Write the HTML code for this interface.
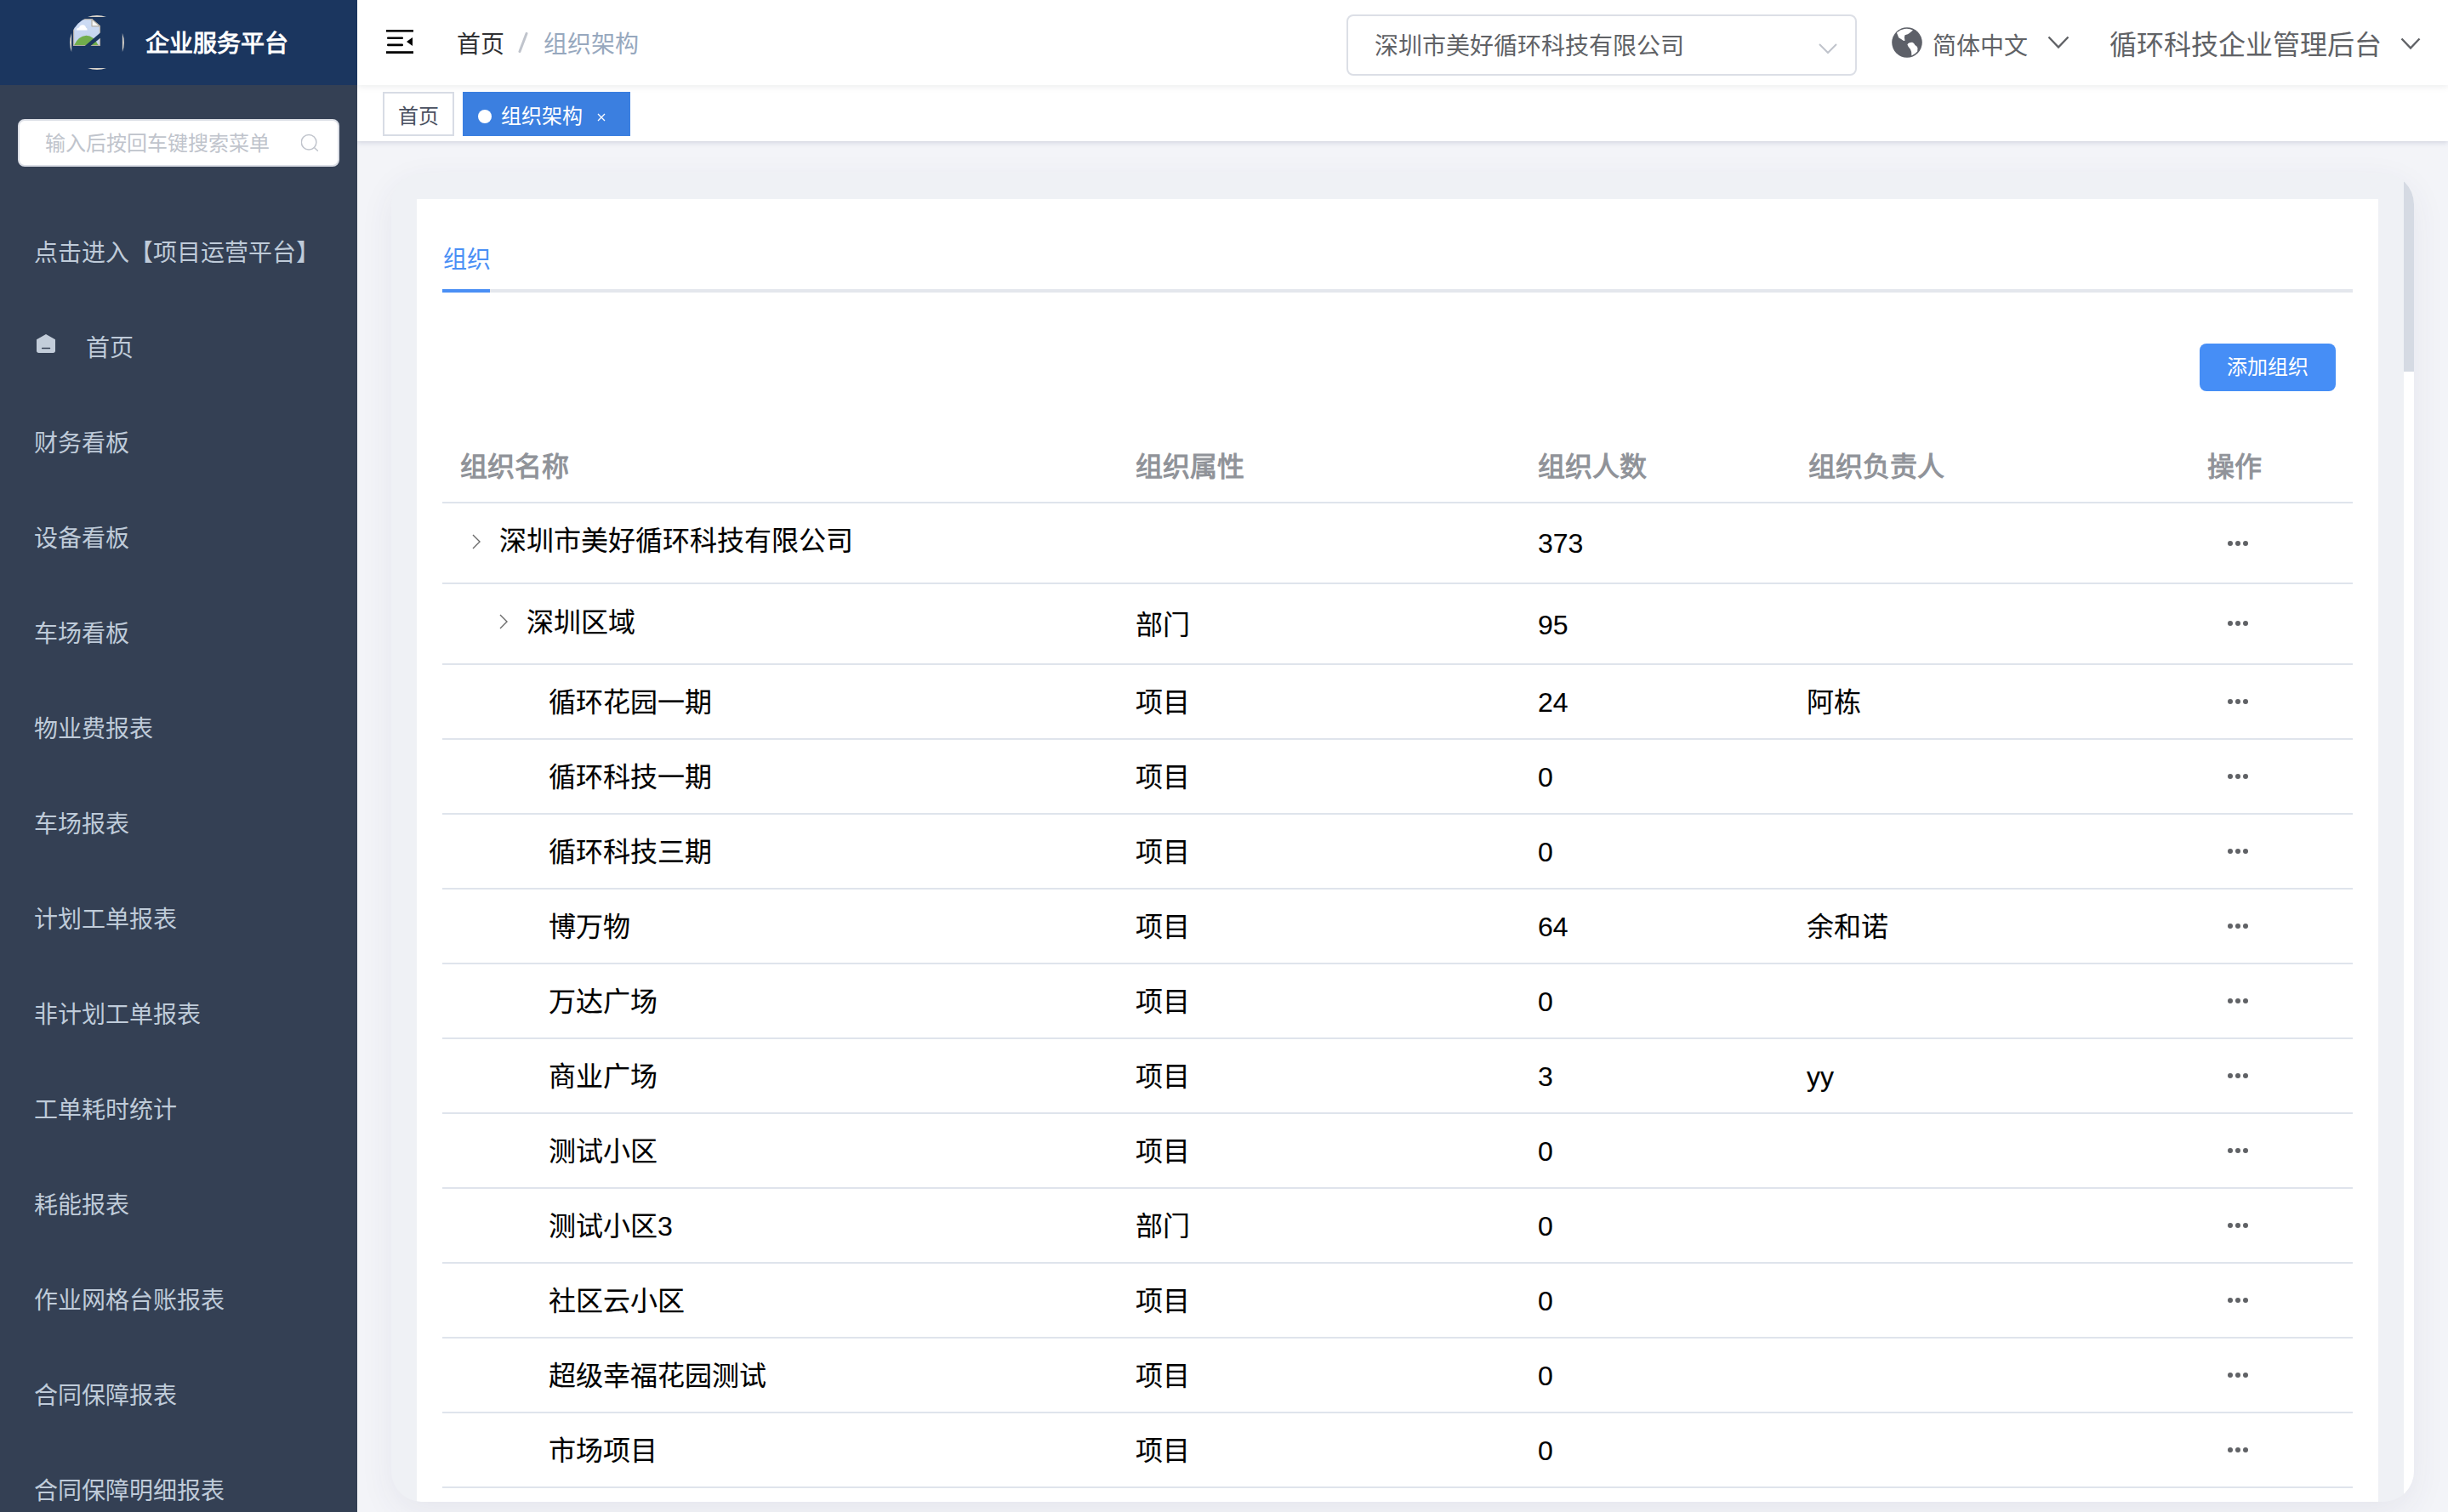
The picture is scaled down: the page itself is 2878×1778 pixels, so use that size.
<!DOCTYPE html>
<html lang="zh-CN">
<head>
<meta charset="utf-8">
<title>组织架构</title>
<style>
*{box-sizing:border-box;margin:0;padding:0}
html,body{width:2878px;height:1778px;overflow:hidden;background:#f3f4f8;font-family:"Liberation Sans",sans-serif;}
.abs{position:absolute}
#side{position:absolute;left:0;top:0;width:420px;height:1778px;background:#344054;z-index:5}
#logo{position:absolute;left:0;top:0;width:420px;height:100px;background:#1b365f}
#logo .title{position:absolute;left:171px;top:32px;font-size:28px;line-height:40px;color:#fff;font-weight:bold;white-space:nowrap}
#search{position:absolute;left:21px;top:140px;width:378px;height:56px;background:#fff;border:2px solid #dcdfe6;border-radius:8px}
#search .ph{position:absolute;left:30px;top:10px;font-size:24px;line-height:34px;color:#c0c4cc;white-space:nowrap}
.mi{position:absolute;left:40px;font-size:28px;line-height:40px;color:#bfcbd9;white-space:nowrap}
#header{position:absolute;left:420px;top:0;width:2458px;height:100px;background:#fff;box-shadow:0 2px 8px rgba(0,21,41,.08);z-index:3}
#tags{position:absolute;left:420px;top:100px;width:2458px;height:66px;background:#fff;box-shadow:0 2px 6px rgba(20,40,100,.13),0 0 6px rgba(0,0,0,.03);z-index:2}
.tag{position:absolute;top:8px;height:52px;font-size:24px;line-height:48px;white-space:nowrap}
#wrap{position:absolute;left:460px;top:204px;width:2378px;height:1562px;background:#eff1f5;border-radius:36px;overflow:hidden;box-shadow:0 12px 40px rgba(50,60,100,.07)}
#card{position:absolute;left:30px;top:30px;width:2306px;height:1600px;background:#fff}
.row{position:absolute;left:30px;width:1910px;border-bottom:2px solid #dfe4ec}
.c{position:absolute;font-size:32px;line-height:44px;color:#000;white-space:nowrap;transform:translateY(1px);-webkit-text-stroke:0.12px #000}
.h{position:absolute;font-size:32px;line-height:44px;color:#909399;font-weight:bold;white-space:nowrap}
.dots{position:absolute;width:24px;height:6px}
.dots i{position:absolute;top:0;width:6px;height:6px;border-radius:50%;background:#606266}
</style>
</head>
<body>
<div id="side">
  <div id="logo">
    <svg class="abs" style="left:82px;top:18px" width="64" height="64" viewBox="0 0 64 64">
      <defs>
        <linearGradient id="sky" x1="0" y1="0" x2="0" y2="1"><stop offset="0" stop-color="#cddcf5"/><stop offset="1" stop-color="#c3d2ec"/></linearGradient>
        <clipPath id="cc"><circle cx="28" cy="28" r="31.5"/></clipPath>
      </defs>
      <g fill="#d8d3cb">
        <path d="M21 2.1 A32 32 0 0 1 43 2.1 Z"/>
        <path d="M43 61.9 A32 32 0 0 1 21 61.9 Z"/>
        <path d="M2.1 43 A32 32 0 0 1 2.1 21 Z"/>
        <path d="M61.9 21 A32 32 0 0 1 61.9 43 Z"/>
      </g>
      <g clip-path="url(#cc)" transform="translate(4,4)">
        <path d="M0.6 31.4 V0.6 H22 L31.4 8.8 V31.4 Z" fill="url(#sky)" stroke="#b3ada4" stroke-width="1.2"/>
        <path d="M22 0.6 V8.8 H31.4 Z" fill="#f6f6f6" stroke="#b3ada4" stroke-width="1.2" stroke-linejoin="round"/>
        <path d="M4 13.5 Q4 10.5 7 10.5 Q8 7 11.5 7.2 Q14.5 7.4 15 10.5 Q16.8 11 16.6 13.5 Z" fill="#fff"/>
        <path d="M1.2 31 Q6 20.5 15.5 19.8 Q24 20 29.5 31 Z" fill="#72ae4c"/>
        <path d="M13.2 32.5 L32.5 16 L32.5 22.3 L19.8 32.5 Z" fill="#1b365f"/>
      </g>
    </svg>
    <div class="title">企业服务平台</div>
  </div>
  <div id="search">
    <div class="ph">输入后按回车键搜索菜单</div>
    <svg class="abs" style="left:331px;top:15px" width="24" height="24" viewBox="0 0 24 24"><circle cx="9.1" cy="10.2" r="8.8" fill="none" stroke="#c0c4cc" stroke-width="1.5"/><path d="M15.4 16.5 L19.4 20.3" stroke="#c0c4cc" stroke-width="1.5" stroke-linecap="round"/></svg>
  </div>
  <div class="mi" style="top:278px">点击进入【项目运营平台】</div>
  <svg class="abs" style="left:43px;top:393px" width="22" height="22" viewBox="0 0 22 22"><path d="M11 0 L22 6.2 V19.3 Q22 22 19.3 22 H2.7 Q0 22 0 19.3 V6.2 Z" fill="#c3cdda"/><path d="M6.6 16.5 H15.6" stroke="#344054" stroke-width="1.3" stroke-linecap="round"/></svg>
  <div class="mi" style="top:390px;left:101px">首页</div>
  <div class="mi" style="top:502px">财务看板</div>
  <div class="mi" style="top:614px">设备看板</div>
  <div class="mi" style="top:726px">车场看板</div>
  <div class="mi" style="top:838px">物业费报表</div>
  <div class="mi" style="top:950px">车场报表</div>
  <div class="mi" style="top:1062px">计划工单报表</div>
  <div class="mi" style="top:1174px">非计划工单报表</div>
  <div class="mi" style="top:1286px">工单耗时统计</div>
  <div class="mi" style="top:1398px">耗能报表</div>
  <div class="mi" style="top:1510px">作业网格台账报表</div>
  <div class="mi" style="top:1622px">合同保障报表</div>
  <div class="mi" style="top:1734px">合同保障明细报表</div>
</div>

<div id="header">
  <svg class="abs" style="left:34px;top:35px" width="32" height="28" viewBox="0 0 32 28">
    <rect x="0" y="0" width="32" height="2.6" fill="#000"/>
    <rect x="1" y="8.4" width="19" height="2.6" rx="1.2" fill="#000"/>
    <rect x="1" y="16.6" width="19" height="2.6" rx="1.2" fill="#000"/>
    <rect x="0" y="25.2" width="32" height="2.8" fill="#000"/>
    <path d="M24 14 L31 9 L31 19 Z" fill="#000"/>
  </svg>
  <div class="abs" style="left:117px;top:33px;font-size:28px;line-height:40px;color:#303133;white-space:nowrap">首页</div>
  <svg class="abs" style="left:188px;top:38px" width="14" height="24" viewBox="0 0 14 24"><path d="M3 22.5 L11 1.5" stroke="#c0c4cc" stroke-width="3" stroke-linecap="round"/></svg>
  <div class="abs" style="left:219px;top:33px;font-size:28px;line-height:40px;color:#97a8be;white-space:nowrap">组织架构</div>
  <div class="abs" style="left:1163px;top:17px;width:600px;height:72px;border:2px solid #dcdfe6;border-radius:8px;background:#fff">
    <div class="abs" style="left:31px;top:16px;font-size:28px;line-height:40px;color:#606266;white-space:nowrap">深圳市美好循环科技有限公司</div>
    <svg class="abs" style="left:553px;top:32px" width="22" height="14" viewBox="0 0 22 14"><path d="M1 1 L11 11 L21 1" fill="none" stroke="#c0c4cc" stroke-width="2"/></svg>
  </div>
  <svg class="abs" style="left:1795px;top:25px" width="50" height="50" viewBox="0 0 50 50">
    <circle cx="27" cy="25" r="17.8" fill="#5d6068"/>
    <path d="M14.9 13.6 A16.4 16.4 0 0 1 34 10.4 L29.8 13.9 Q28.5 15.1 24.5 16.2 Q23.3 18.5 24.5 22.8 L23.1 23.1 Q20 20.6 17.2 19.2 Q16 16.2 14.9 13.6 Z" fill="#fff"/>
    <path d="M27.4 27.4 Q28.5 25.2 33.1 24.8 Q35.5 25.8 36.4 28.1 Q39 29.2 39.5 31.5 L39.2 35.5 A16.3 16.3 0 0 1 32.4 40.4 Q32.8 36 31 33 Q28.5 30.5 27.4 27.4 Z" fill="#fff"/>
  </svg>
  <div class="abs" style="left:1852px;top:35px;font-size:28px;line-height:40px;color:#606266;white-space:nowrap">简体中文</div>
  <svg class="abs" style="left:1987px;top:42px" width="26" height="16" viewBox="0 0 26 16"><path d="M1.5 1.5 L13 13.5 L24.5 1.5" fill="none" stroke="#606266" stroke-width="2.4"/></svg>
  <div class="abs" style="left:2060px;top:31px;font-size:32px;line-height:44px;color:#606266;white-space:nowrap">循环科技企业管理后台</div>
  <svg class="abs" style="left:2402px;top:44px" width="24" height="15" viewBox="0 0 24 15"><path d="M1.5 1.5 L12 12.5 L22.5 1.5" fill="none" stroke="#606266" stroke-width="2.4"/></svg>
</div>
<div id="tags">
  <div class="tag" style="left:30px;width:84px;border:2px solid #d8dce5;background:#fff;color:#495060">
    <div class="abs" style="left:16px;top:3px;">首页</div>
  </div>
  <div class="tag" style="left:124px;width:197px;background:#3b7fe0;color:#fff">
    <div class="abs" style="left:18px;top:21px;width:16px;height:16px;border-radius:50%;background:#fff"></div>
    <div class="abs" style="left:45px;top:5px;">组织架构</div>
    <svg class="abs" style="left:158px;top:25px" width="10" height="10" viewBox="0 0 10 10"><path d="M1 1 L9 9 M9 1 L1 9" stroke="#fff" stroke-width="1.3"/></svg>
  </div>
</div>

<div id="wrap">
  <div id="card">
<div class="abs" style="left:31px;top:52px;font-size:28px;line-height:40px;color:#4a8ff5;white-space:nowrap">组织</div>
<div class="abs" style="left:30px;top:106px;width:2246px;height:4px;background:#e4e7ed"></div>
<div class="abs" style="left:30px;top:106px;width:56px;height:4px;background:#4a8ff5"></div>
<div class="abs" style="left:2096px;top:170px;width:160px;height:56px;border-radius:8px;background:#468ef6"><div class="abs" style="left:32px;top:8px;font-size:24px;line-height:40px;color:#fff;white-space:nowrap">添加组织</div></div>
<div class="h" style="left:51px;top:293px">组织名称</div>
<div class="h" style="left:845px;top:293px">组织属性</div>
<div class="h" style="left:1318px;top:293px">组织人数</div>
<div class="h" style="left:1636px;top:293px">组织负责人</div>
<div class="h" style="left:2105px;top:293px">操作</div>
<div class="abs" style="left:30px;top:356px;width:2246px;height:2px;background:#dfe4ec"></div>
<svg class="abs" style="left:64px;top:393px" width="12" height="20" viewBox="0 0 12 20"><path d="M2 2 L10 10 L2 18" fill="none" stroke="#6a6a6a" stroke-width="1.4"/></svg>
<div class="c" style="left:97px;top:379px">深圳市美好循环科技有限公司</div>
<div class="c" style="left:1318px;top:382px">373</div>
<div class="dots" style="left:2129px;top:402px"><i style="left:0"></i><i style="left:9px"></i><i style="left:18px"></i></div>
<div class="abs" style="left:30px;top:451px;width:2246px;height:2px;background:#dfe4ec"></div>
<svg class="abs" style="left:96px;top:487px" width="12" height="20" viewBox="0 0 12 20"><path d="M2 2 L10 10 L2 18" fill="none" stroke="#6a6a6a" stroke-width="1.4"/></svg>
<div class="c" style="left:129px;top:475px">深圳区域</div>
<div class="c" style="left:845px;top:478px">部门</div>
<div class="c" style="left:1318px;top:478px">95</div>
<div class="dots" style="left:2129px;top:496px"><i style="left:0"></i><i style="left:9px"></i><i style="left:18px"></i></div>
<div class="abs" style="left:30px;top:546px;width:2246px;height:2px;background:#dfe4ec"></div>
<div class="c" style="left:155px;top:569px">循环花园一期</div>
<div class="c" style="left:845px;top:569px">项目</div>
<div class="c" style="left:1318px;top:569px">24</div>
<div class="c" style="left:1634px;top:569px">阿栋</div>
<div class="dots" style="left:2129px;top:588px"><i style="left:0"></i><i style="left:9px"></i><i style="left:18px"></i></div>
<div class="abs" style="left:30px;top:634px;width:2246px;height:2px;background:#dfe4ec"></div>
<div class="c" style="left:155px;top:657px">循环科技一期</div>
<div class="c" style="left:845px;top:657px">项目</div>
<div class="c" style="left:1318px;top:657px">0</div>
<div class="dots" style="left:2129px;top:676px"><i style="left:0"></i><i style="left:9px"></i><i style="left:18px"></i></div>
<div class="abs" style="left:30px;top:722px;width:2246px;height:2px;background:#dfe4ec"></div>
<div class="c" style="left:155px;top:745px">循环科技三期</div>
<div class="c" style="left:845px;top:745px">项目</div>
<div class="c" style="left:1318px;top:745px">0</div>
<div class="dots" style="left:2129px;top:764px"><i style="left:0"></i><i style="left:9px"></i><i style="left:18px"></i></div>
<div class="abs" style="left:30px;top:810px;width:2246px;height:2px;background:#dfe4ec"></div>
<div class="c" style="left:155px;top:833px">博万物</div>
<div class="c" style="left:845px;top:833px">项目</div>
<div class="c" style="left:1318px;top:833px">64</div>
<div class="c" style="left:1634px;top:833px">余和诺</div>
<div class="dots" style="left:2129px;top:852px"><i style="left:0"></i><i style="left:9px"></i><i style="left:18px"></i></div>
<div class="abs" style="left:30px;top:898px;width:2246px;height:2px;background:#dfe4ec"></div>
<div class="c" style="left:155px;top:921px">万达广场</div>
<div class="c" style="left:845px;top:921px">项目</div>
<div class="c" style="left:1318px;top:921px">0</div>
<div class="dots" style="left:2129px;top:940px"><i style="left:0"></i><i style="left:9px"></i><i style="left:18px"></i></div>
<div class="abs" style="left:30px;top:986px;width:2246px;height:2px;background:#dfe4ec"></div>
<div class="c" style="left:155px;top:1009px">商业广场</div>
<div class="c" style="left:845px;top:1009px">项目</div>
<div class="c" style="left:1318px;top:1009px">3</div>
<div class="c" style="left:1634px;top:1009px">yy</div>
<div class="dots" style="left:2129px;top:1028px"><i style="left:0"></i><i style="left:9px"></i><i style="left:18px"></i></div>
<div class="abs" style="left:30px;top:1074px;width:2246px;height:2px;background:#dfe4ec"></div>
<div class="c" style="left:155px;top:1097px">测试小区</div>
<div class="c" style="left:845px;top:1097px">项目</div>
<div class="c" style="left:1318px;top:1097px">0</div>
<div class="dots" style="left:2129px;top:1116px"><i style="left:0"></i><i style="left:9px"></i><i style="left:18px"></i></div>
<div class="abs" style="left:30px;top:1162px;width:2246px;height:2px;background:#dfe4ec"></div>
<div class="c" style="left:155px;top:1185px">测试小区3</div>
<div class="c" style="left:845px;top:1185px">部门</div>
<div class="c" style="left:1318px;top:1185px">0</div>
<div class="dots" style="left:2129px;top:1204px"><i style="left:0"></i><i style="left:9px"></i><i style="left:18px"></i></div>
<div class="abs" style="left:30px;top:1250px;width:2246px;height:2px;background:#dfe4ec"></div>
<div class="c" style="left:155px;top:1273px">社区云小区</div>
<div class="c" style="left:845px;top:1273px">项目</div>
<div class="c" style="left:1318px;top:1273px">0</div>
<div class="dots" style="left:2129px;top:1292px"><i style="left:0"></i><i style="left:9px"></i><i style="left:18px"></i></div>
<div class="abs" style="left:30px;top:1338px;width:2246px;height:2px;background:#dfe4ec"></div>
<div class="c" style="left:155px;top:1361px">超级幸福花园测试</div>
<div class="c" style="left:845px;top:1361px">项目</div>
<div class="c" style="left:1318px;top:1361px">0</div>
<div class="dots" style="left:2129px;top:1380px"><i style="left:0"></i><i style="left:9px"></i><i style="left:18px"></i></div>
<div class="abs" style="left:30px;top:1426px;width:2246px;height:2px;background:#dfe4ec"></div>
<div class="c" style="left:155px;top:1449px">市场项目</div>
<div class="c" style="left:845px;top:1449px">项目</div>
<div class="c" style="left:1318px;top:1449px">0</div>
<div class="dots" style="left:2129px;top:1468px"><i style="left:0"></i><i style="left:9px"></i><i style="left:18px"></i></div>
<div class="abs" style="left:30px;top:1514px;width:2246px;height:2px;background:#dfe4ec"></div>
<div class="abs" style="left:30px;top:1602px;width:2246px;height:2px;background:#dfe4ec"></div>
  </div>
  <div class="abs" style="left:2366px;top:0;width:12px;height:1562px;background:#fff"></div>
  <div class="abs" style="left:2366px;top:0;width:12px;height:233px;background:#d5dae3"></div>
</div>
</body>
</html>
